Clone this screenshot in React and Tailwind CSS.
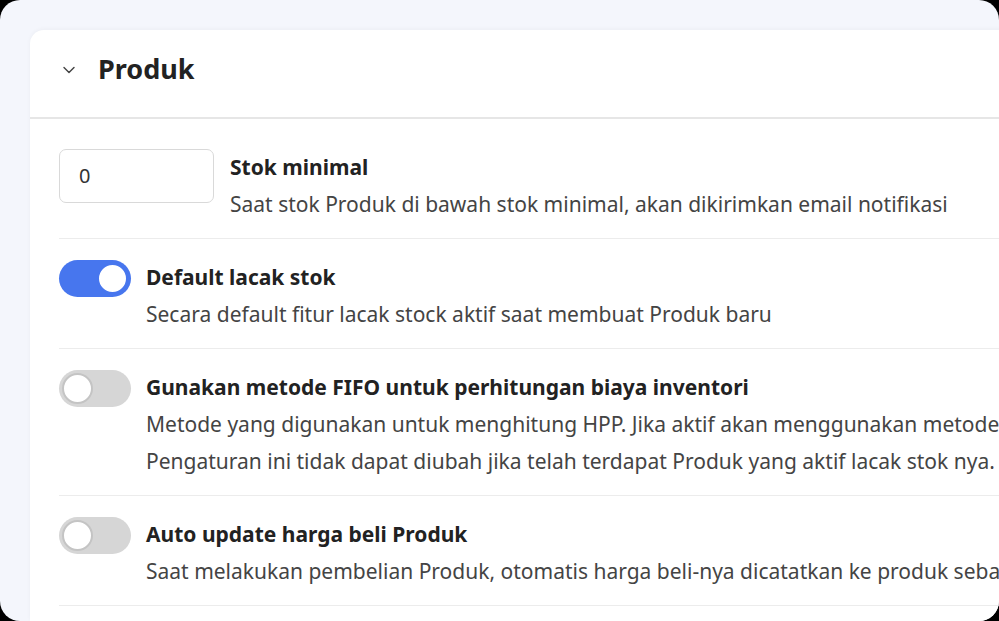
import { ChevronDown } from "lucide-react";

const rows = [
  {
    on: true,
    title: "Default lacak stok",
    desc: ["Secara default fitur lacak stock aktif saat membuat Produk baru"],
  },
  {
    on: false,
    title: "Gunakan metode FIFO untuk perhitungan biaya inventori",
    desc: [
      "Metode yang digunakan untuk menghitung HPP. Jika aktif akan menggunakan metode FIFO, jika tidak aktif akan menggunakan metode rata-rata.",
      "Pengaturan ini tidak dapat diubah jika telah terdapat Produk yang aktif lacak stok nya.",
    ],
  },
  {
    on: false,
    title: "Auto update harga beli Produk",
    desc: ["Saat melakukan pembelian Produk, otomatis harga beli-nya dicatatkan ke produk sebagai harga beli terbaru"],
  },
];

function Toggle({ on }) {
  return (
    <div
      className={
        on
          ? "w-[72px] h-[37px] shrink-0 rounded-full bg-[#4776ee] flex items-center justify-end p-[3px]"
          : "w-[72px] h-[37px] shrink-0 rounded-full bg-[#d6d6d6] flex items-center justify-start p-[3px]"
      }
    >
      <div
        className={
          on
            ? "w-[31px] h-[31px] rounded-full bg-white border-[2px] border-[#4776ee]"
            : "w-[31px] h-[31px] rounded-full bg-white border-[2px] border-[#c4c4c4]"
        }
      />
    </div>
  );
}

function Text({ title, desc }) {
  return (
    <div className="min-w-0 whitespace-nowrap">
      <div className="text-[21px] leading-[37px] font-bold text-[#222]">{title}</div>
      {desc.map((d) => (
        <div key={d} className="text-[21px] leading-[37px] text-[#444]">
          {d}
        </div>
      ))}
    </div>
  );
}

export default function App() {
  return (
    <div className="w-[999px] h-[621px] bg-black overflow-hidden" style={{ fontFamily: '"Noto Sans", "Open Sans", sans-serif' }}>
      <div className="w-full h-full rounded-[20px] bg-[#f4f6fc] overflow-hidden pt-[30px] pl-[30px]">
        <div className="w-[1000px] h-full bg-white rounded-tl-[14px] shadow-[0_-1px_4px_rgba(0,0,0,0.04)] overflow-hidden">
          {/* header */}
          <div className="h-[89px] flex items-center pl-[29px] pb-[8px] gap-[19px] border-b-[2px] border-[#e6e6e6]">
            <ChevronDown size={20} strokeWidth={1.7} className="text-[#444]" />
            <h2 className="text-[27px] font-bold text-[#222]">Produk</h2>
          </div>

          <div className="pl-[29px] pt-[10px]">
            <div className="flex items-start gap-[16px] pt-[20px] pb-[15px] border-b border-[#ececec]">
              <div className="w-[155px] h-[54px] shrink-0 rounded-[7px] border border-[#d9d9d9] flex items-center pl-[19px] text-[20px] text-[#333]">
                0
              </div>
              <Text title="Stok minimal" desc={["Saat stok Produk di bawah stok minimal, akan dikirimkan email notifikasi"]} />
            </div>

            {rows.map((r) => (
              <div key={r.title} className="flex items-start gap-[15px] pt-[20px] pb-[15px] border-b border-[#ececec]">
                <div className="pt-[1px]">
                  <Toggle on={r.on} />
                </div>
                <Text title={r.title} desc={r.desc} />
              </div>
            ))}
          </div>
        </div>
      </div>
    </div>
  );
}
